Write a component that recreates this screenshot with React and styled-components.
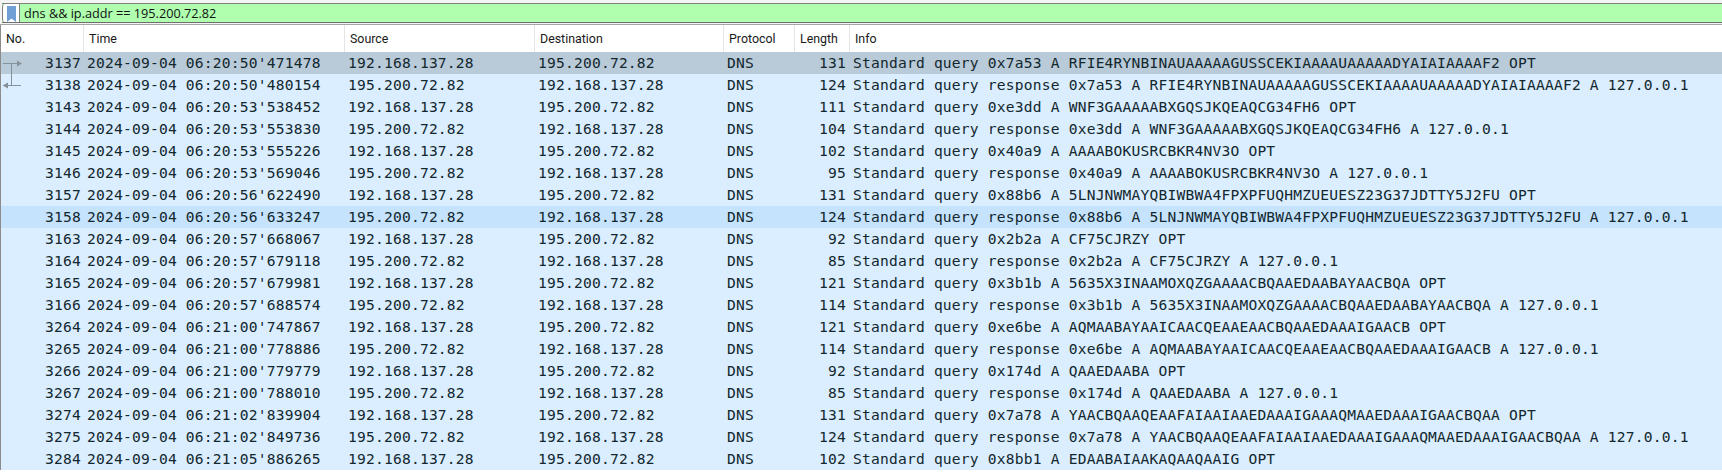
import React from 'react';
import styled, { createGlobalStyle } from 'styled-components';

const GlobalStyle = createGlobalStyle`
  html, body {
    margin: 0;
    padding: 0;
    background: #fff;
    overflow: hidden;
  }
`;

const columns = '83px 261px 190px 189px 71px 55px 1fr';

const packets = [
  ['3137', "06:20:50'471478", '192.168.137.28', '195.200.72.82', '131', 'Standard query 0x7a53 A RFIE4RYNBINAUAAAAAGUSSCEKIAAAAUAAAAADYAIAIAAAAF2 OPT'],
  ['3138', "06:20:50'480154", '195.200.72.82', '192.168.137.28', '124', 'Standard query response 0x7a53 A RFIE4RYNBINAUAAAAAGUSSCEKIAAAAUAAAAADYAIAIAAAAF2 A 127.0.0.1'],
  ['3143', "06:20:53'538452", '192.168.137.28', '195.200.72.82', '111', 'Standard query 0xe3dd A WNF3GAAAAABXGQSJKQEAQCG34FH6 OPT'],
  ['3144', "06:20:53'553830", '195.200.72.82', '192.168.137.28', '104', 'Standard query response 0xe3dd A WNF3GAAAAABXGQSJKQEAQCG34FH6 A 127.0.0.1'],
  ['3145', "06:20:53'555226", '192.168.137.28', '195.200.72.82', '102', 'Standard query 0x40a9 A AAAABOKUSRCBKR4NV3O OPT'],
  ['3146', "06:20:53'569046", '195.200.72.82', '192.168.137.28', '95', 'Standard query response 0x40a9 A AAAABOKUSRCBKR4NV3O A 127.0.0.1'],
  ['3157', "06:20:56'622490", '192.168.137.28', '195.200.72.82', '131', 'Standard query 0x88b6 A 5LNJNWMAYQBIWBWA4FPXPFUQHMZUEUESZ23G37JDTTY5J2FU OPT'],
  ['3158', "06:20:56'633247", '195.200.72.82', '192.168.137.28', '124', 'Standard query response 0x88b6 A 5LNJNWMAYQBIWBWA4FPXPFUQHMZUEUESZ23G37JDTTY5J2FU A 127.0.0.1'],
  ['3163', "06:20:57'668067", '192.168.137.28', '195.200.72.82', '92', 'Standard query 0x2b2a A CF75CJRZY OPT'],
  ['3164', "06:20:57'679118", '195.200.72.82', '192.168.137.28', '85', 'Standard query response 0x2b2a A CF75CJRZY A 127.0.0.1'],
  ['3165', "06:20:57'679981", '192.168.137.28', '195.200.72.82', '121', 'Standard query 0x3b1b A 5635X3INAAMOXQZGAAAACBQAAEDAABAYAACBQA OPT'],
  ['3166', "06:20:57'688574", '195.200.72.82', '192.168.137.28', '114', 'Standard query response 0x3b1b A 5635X3INAAMOXQZGAAAACBQAAEDAABAYAACBQA A 127.0.0.1'],
  ['3264', "06:21:00'747867", '192.168.137.28', '195.200.72.82', '121', 'Standard query 0xe6be A AQMAABAYAAICAACQEAAEAACBQAAEDAAAIGAACB OPT'],
  ['3265', "06:21:00'778886", '195.200.72.82', '192.168.137.28', '114', 'Standard query response 0xe6be A AQMAABAYAAICAACQEAAEAACBQAAEDAAAIGAACB A 127.0.0.1'],
  ['3266', "06:21:00'779779", '192.168.137.28', '195.200.72.82', '92', 'Standard query 0x174d A QAAEDAABA OPT'],
  ['3267', "06:21:00'788010", '195.200.72.82', '192.168.137.28', '85', 'Standard query response 0x174d A QAAEDAABA A 127.0.0.1'],
  ['3274', "06:21:02'839904", '192.168.137.28', '195.200.72.82', '131', 'Standard query 0x7a78 A YAACBQAAQEAAFAIAAIAAEDAAAIGAAAQMAAEDAAAIGAACBQAA OPT'],
  ['3275', "06:21:02'849736", '195.200.72.82', '192.168.137.28', '124', 'Standard query response 0x7a78 A YAACBQAAQEAAFAIAAIAAEDAAAIGAAAQMAAEDAAAIGAACBQAA A 127.0.0.1'],
  ['3284', "06:21:05'886265", '192.168.137.28', '195.200.72.82', '102', 'Standard query 0x8bb1 A EDAABAIAAKAQAAQAAIG OPT'],
];

const Page = styled.div`
  width: 1722px;
  height: 474px;
  overflow: hidden;
  box-sizing: border-box;
  background: #fff;
`;

const FilterBar = styled.div`
  height: 25px;
  box-sizing: border-box;
  padding-top: 3px;
  background: #f4f4f4;
  border-bottom: 1px solid #a6a6a6;
`;

const FilterField = styled.div`
  display: flex;
  align-items: stretch;
  height: 20px;
  box-sizing: border-box;
  margin-left: 2px;
  background: #afffaf;
  border-top: 1px solid #808080;
  border-bottom: 1px solid #6e6e6e;
`;

const Bookmark = styled.div`
  flex: none;
  width: 18px;
  box-sizing: border-box;
  display: flex;
  align-items: flex-end;
  justify-content: center;
  background: #fff;
  border: 1px solid #808080;
  border-width: 0 1px;
  border-radius: 3px 0 0 3px;
`;

const FilterText = styled.span`
  padding-left: 4px;
  font: 12.7px/18px "Open Sans", "Noto Sans", sans-serif;
  color: #111;
`;

const Table = styled.div`
  border-left: 1px solid #8c8c8c;
`;

const HeaderRow = styled.div`
  display: grid;
  grid-template-columns: ${columns};
  height: 27px;
  background: #fff;
`;

const HeaderCell = styled.div`
  padding-left: 5px;
  font: 12.4px/27px Roboto, "Open Sans", sans-serif;
  color: #1a1a1a;
  border-right: 1px solid #e5e5e5;

  &:last-child {
    border-right: 0;
  }
`;

const Row = styled.div`
  position: relative;
  display: grid;
  grid-template-columns: ${columns};
  height: 22px;
  background: ${(p) => (p.$tone === 'selected' ? '#b9cad8' : p.$tone === 'hover' ? '#c5e3fd' : '#daeeff')};
`;

const Cell = styled.div`
  padding: 0 ${(p) => p.$right || 0}px 0 ${(p) => (p.$right ? 0 : 3)}px;
  font: 14.6px/22px "DejaVu Sans Mono", "Liberation Mono", monospace;
  letter-spacing: 0.2px;
  color: #12272e;
  white-space: nowrap;
  text-align: ${(p) => (p.$right ? 'right' : 'left')};
`;

const FlowMark = styled.svg`
  position: absolute;
  left: 0;
  top: 0;
  width: 22px;
  height: 22px;
`;

function BookmarkIcon() {
  return (
    <svg width="9" height="16" viewBox="0 0 9 16">
      <path d="M0 0H9V16L4.5 12.5L0 16Z" fill="#6f9fd4" />
    </svg>
  );
}

function RequestMark() {
  return (
    <FlowMark viewBox="0 0 22 22">
      <path d="M2 11.5H16M10.5 11.5V22" stroke="#86929a" fill="none" />
      <path d="M16 8.5L21 11.5L16 14.5Z" fill="#86929a" />
    </FlowMark>
  );
}

function ResponseMark() {
  return (
    <FlowMark viewBox="0 0 22 22">
      <path d="M7 11.5H20M10.5 0V11.5" stroke="#86929a" fill="none" />
      <path d="M7 8.5L1.5 11.5L7 14.5Z" fill="#86929a" />
    </FlowMark>
  );
}

export default function App() {
  return (
    <Page>
      <GlobalStyle />
      <FilterBar>
        <FilterField>
          <Bookmark><BookmarkIcon /></Bookmark>
          <FilterText>dns &amp;&amp; ip.addr == 195.200.72.82</FilterText>
        </FilterField>
      </FilterBar>
      <Table>
        <HeaderRow>
          <HeaderCell>No.</HeaderCell>
          <HeaderCell>Time</HeaderCell>
          <HeaderCell>Source</HeaderCell>
          <HeaderCell>Destination</HeaderCell>
          <HeaderCell>Protocol</HeaderCell>
          <HeaderCell>Length</HeaderCell>
          <HeaderCell>Info</HeaderCell>
        </HeaderRow>
        {packets.map(([no, time, src, dst, len, info], i) => (
          <Row key={no} $tone={i === 0 ? 'selected' : i === 7 ? 'hover' : 'normal'}>
            {i === 0 && <RequestMark />}
            {i === 1 && <ResponseMark />}
            <Cell $right={3}>{no}</Cell>
            <Cell>2024-09-04 {time}</Cell>
            <Cell>{src}</Cell>
            <Cell>{dst}</Cell>
            <Cell>DNS</Cell>
            <Cell $right={4}>{len}</Cell>
            <Cell>{info}</Cell>
          </Row>
        ))}
      </Table>
    </Page>
  );
}
